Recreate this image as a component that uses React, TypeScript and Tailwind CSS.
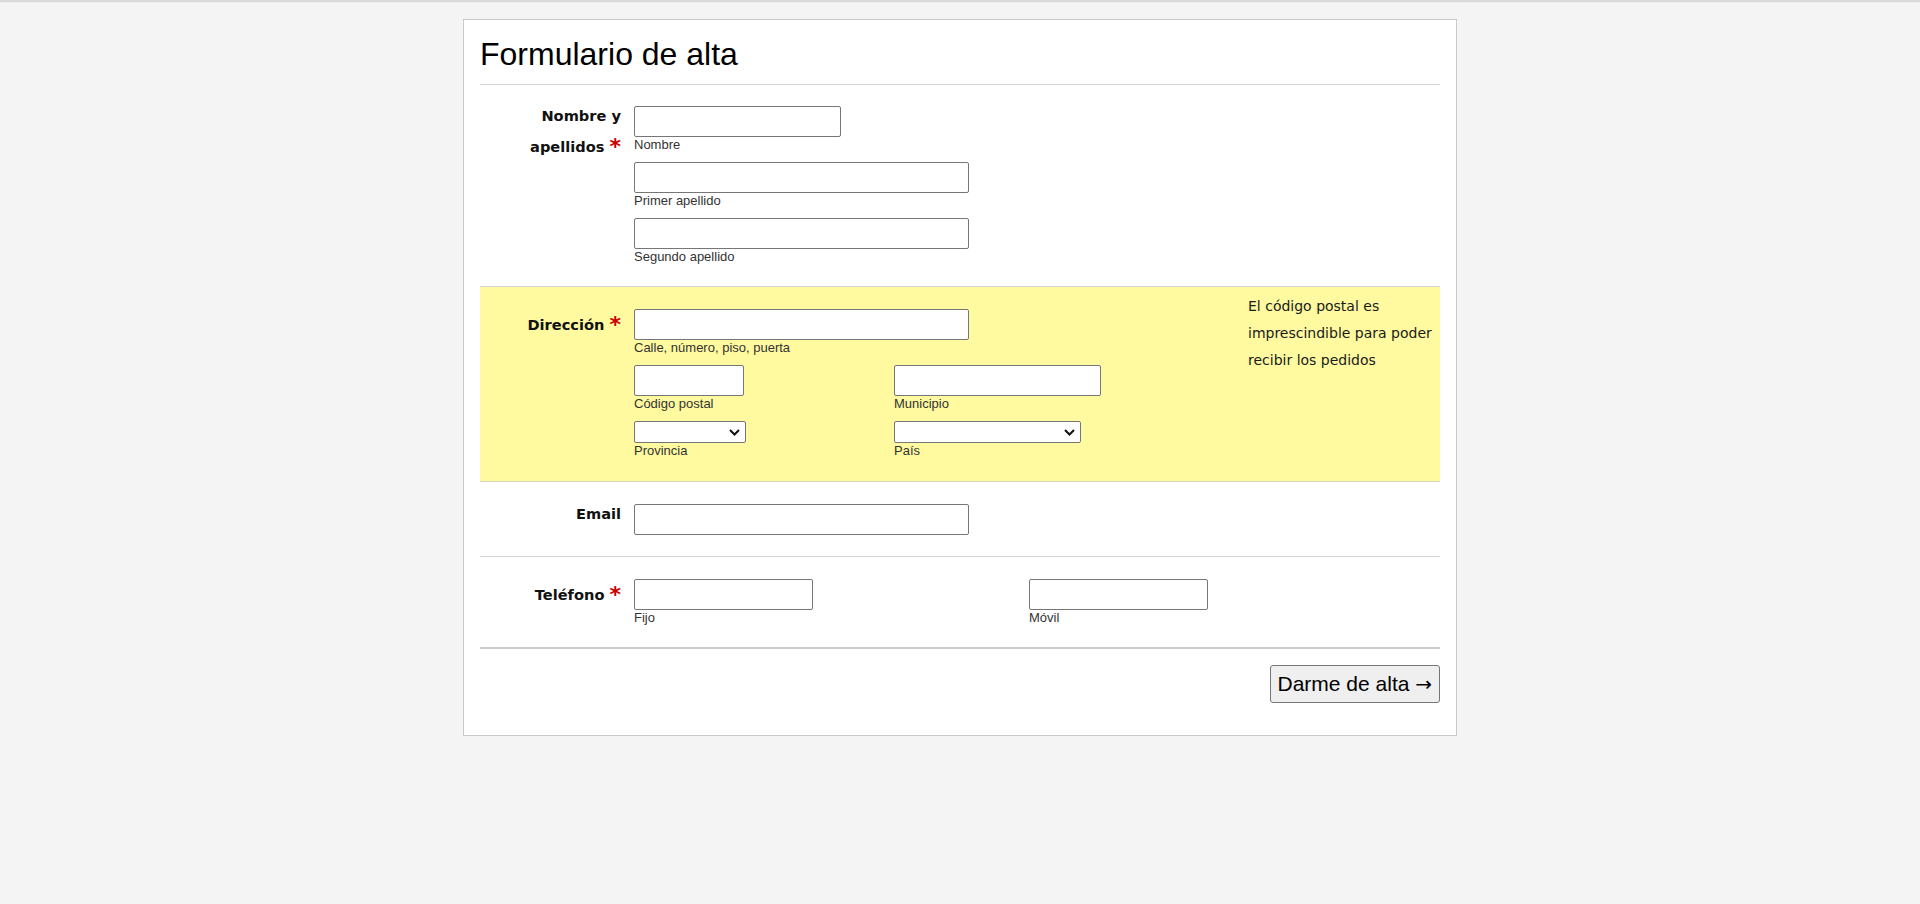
import type { ReactNode } from 'react';

const inputBase = 'block h-[31px] border border-[#767676] rounded-[2px] bg-white';
const hint = "block text-[13px] leading-[15px] text-[#333] font-['Liberation_Sans',Arial,sans-serif]";

const Required = () => (
  <span className="relative top-[2px] text-[22px] leading-none font-bold text-[#cc0000]">*</span>
);

interface FieldProps {
  width: string;
  label?: string;
}

const TextField = ({ width, label }: FieldProps) => (
  <div>
    <input type="text" className={`${inputBase} ${width}`} />
    {label && <span className={hint}>{label}</span>}
  </div>
);

const SelectField = ({ width, label }: FieldProps) => (
  <div>
    <div className={`relative h-[22px] ${width}`}>
      <select className="block h-full w-full appearance-none border border-[#767676] rounded-[2px] bg-white" />
      <svg
        className="pointer-events-none absolute right-[6px] top-[8px]"
        width="11"
        height="7"
        viewBox="0 0 11 7"
        fill="none"
      >
        <path d="M1 1l4.5 4.5L10 1" stroke="#111" strokeWidth="2" />
      </svg>
    </div>
    <span className={hint}>{label}</span>
  </div>
);

interface RowProps {
  label: ReactNode;
  labelOffset: string;
  children: ReactNode;
  className: string;
  aside?: ReactNode;
}

const Row = ({ label, labelOffset, children, className, aside }: RowProps) => (
  <div className={`flex gap-[13px] ${className}`}>
    <div
      className={`w-[141px] shrink-0 text-right text-[14.6px] leading-[31px] font-bold text-[#111] ${labelOffset}`}
    >
      {label}
    </div>
    <div className="flex-1">{children}</div>
    {aside}
  </div>
);

export default function App() {
  return (
    <div className="min-h-screen bg-[#f4f4f4] font-['DejaVu_Sans',Verdana,sans-serif]">
      <div className="h-[2px] bg-[#d9d9d9]" />
      <div className="h-[1px] bg-[#efefef]" />
      <div className="mx-auto mt-[16px] w-[994px] border border-[#c9c9c9] bg-white p-4">
        <h1 className="mb-[12px] text-[32px] leading-[36px] font-normal text-black font-['Liberation_Sans',Arial,sans-serif]">
          Formulario de alta
        </h1>
        <div className="border-t border-[#d3d3d3]" />

        <Row
          className="pt-[21px] pb-[22px] border-b border-[#d3d3d3]"
          labelOffset="-mt-[6px]"
          label={
            <>
              Nombre y<br />
              apellidos <Required />
            </>
          }
        >
          <div className="flex flex-col gap-[10px]">
            <TextField width="w-[207px]" label="Nombre" />
            <TextField width="w-[335px]" label="Primer apellido" />
            <TextField width="w-[335px]" label="Segundo apellido" />
          </div>
        </Row>

        <Row
          className="bg-[#fffaa0] pt-[22px] pb-[23px] border-b border-[#d8d8c0]"
          labelOffset="mt-0"
          label={
            <>
              Dirección <Required />
            </>
          }
          aside={
            <p className="w-[192px] shrink-0 -mt-[16px] text-[14px] leading-[27px] text-[#1a1a1a]">
              El código postal es imprescindible para poder recibir los pedidos
            </p>
          }
        >
          <div className="flex flex-col gap-[10px]">
            <TextField width="w-[335px]" label="Calle, número, piso, puerta" />
            <div className="grid grid-cols-[260px_1fr]">
              <TextField width="w-[110px]" label="Código postal" />
              <TextField width="w-[207px]" label="Municipio" />
            </div>
            <div className="grid grid-cols-[260px_1fr]">
              <SelectField width="w-[112px]" label="Provincia" />
              <SelectField width="w-[187px]" label="País" />
            </div>
          </div>
        </Row>

        <Row
          className="pt-[22px] pb-[21px] border-b border-[#d3d3d3]"
          labelOffset="-mt-[6px]"
          label="Email"
        >
          <TextField width="w-[335px]" />
        </Row>

        <Row
          className="pt-[22px] pb-[22px] border-b-2 border-[#cccccc]"
          labelOffset="mt-0"
          label={
            <>
              Teléfono <Required />
            </>
          }
        >
          <div className="grid grid-cols-[395px_1fr]">
            <TextField width="w-[179px]" label="Fijo" />
            <TextField width="w-[179px]" label="Móvil" />
          </div>
        </Row>

        <div className="flex justify-end pt-[16px] pb-[16px]">
          <button
            type="button"
            className="h-[38px] rounded-[3px] border border-[#767676] bg-[#efefef] px-[7px] text-[21px] leading-[24px] text-black font-['Liberation_Sans',Arial,sans-serif]"
          >
            Darme de alta <span className="font-['DejaVu_Sans',sans-serif] text-[20px]">→</span>
          </button>
        </div>
      </div>
    </div>
  );
}
